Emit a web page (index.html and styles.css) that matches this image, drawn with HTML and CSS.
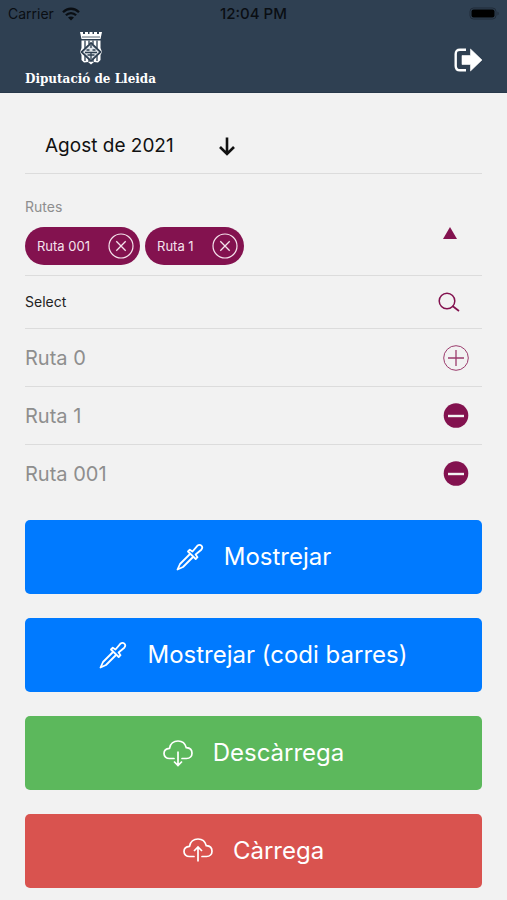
FILE: index.html
```html
<!DOCTYPE html>
<html lang="ca">
<head>
<meta charset="utf-8">
<meta name="viewport" content="width=device-width, initial-scale=1">
<title>Diputació de Lleida</title>
<link rel="stylesheet" href="styles.css">
</head>
<body>
<svg class="defs" aria-hidden="true">
  <symbol id="dropper" viewBox="0 0 28 28">
    <g fill="none" stroke="currentColor" stroke-width="1.8" stroke-linejoin="round" stroke-linecap="round">
      <path d="M14 11 4 21 1.500 26.500 7 24 17 14"/>
      <path d="M12 8.500 13.800 6.700 16.500 8.500 21.300 2.800C24.300.3 27.800 3.700 25.300 6.700L19.600 11.500 21.500 14.200 19.700 16Z"/>
    </g>
  </symbol>
  <symbol id="cloud" viewBox="0 0 30 28">
    <path d="M11 19.500H6.500C3.200 19.500 1 17.300 1 14.500 1 11.500 3.300 9.500 6.500 9.300 7.200 4.800 10.800 2 15 2 19.300 2 22.300 4.800 23.300 8.700 26.800 9 29 11.300 29 14.200 29 17.200 26.800 19.500 23.500 19.500H19" fill="none" stroke="currentColor" stroke-width="1.700" stroke-linecap="round"/>
  </symbol>
  <symbol id="minus" viewBox="0 0 26 26">
    <circle cx="13" cy="12.500" r="12.300" fill="#83124f"/>
    <path d="M5 13H21" stroke="#f3f3f3" stroke-width="2.400"/>
  </symbol>
  <symbol id="remove" viewBox="0 0 26 26">
    <circle cx="13" cy="13" r="12" fill="none" stroke="currentColor" stroke-width="1.200"/>
    <path d="M8.300 8.300 17.700 17.700M17.700 8.300 8.300 17.700" stroke="currentColor" stroke-width="1.300"/>
  </symbol>
</svg>

<header class="header">
  <div class="status">
    <span class="carrier">Carrier
      <svg class="wifi" viewBox="0 0 18 14" aria-hidden="true">
        <path d="M1 5.200C5.500.6 12.500.6 17 5.200M3.900 8.200C6.800 5.300 11.200 5.300 14.100 8.200" fill="none" stroke="currentColor" stroke-width="2.300"/>
        <path d="M9 13.500 6 10.500C7.600 9 10.400 9 12 10.500Z" fill="currentColor"/>
      </svg>
    </span>
    <time class="clock">12:04 PM</time>
    <svg class="battery" viewBox="0 0 30 14" aria-hidden="true">
      <rect x="1" y="1" width="26" height="11" rx="3.500" fill="none" stroke="#202b38"/>
      <rect x="2.500" y="2.500" width="23" height="8" rx="2" fill="#000"/>
      <path d="M28.500 4.500V8.500C30 7.800 30 5.200 28.500 4.500Z" fill="#202b38"/>
    </svg>
  </div>
  <div class="bar">
    <div class="brand">
      <svg class="crest" viewBox="0 0 24 34" aria-hidden="true">
        <path d="M1 1H4V3H6V1H9V3H10.500V1H13.500V3H15V1H18V3H20V1H23L21.500 8H2.500Z" fill="#fff"/>
        <path d="M3 6H21" stroke="#2f4052" stroke-width=".8"/>
        <path d="M2.500 9.500H21.500V17L23 21 21.500 24V29L19 31.500 15 31 12 33.500 9 31 5 31.500 2.500 29V24L1 21 2.500 17Z" fill="#fff"/>
        <path d="M6 9.500V17M10 9.500V13M14 9.500V13M18 9.500V17M6 25V30M10 28V31M14 28V31M18 25V30" stroke="#2f4052" stroke-width="1.300"/>
        <path d="M12 12 21.500 21 12 30 2.500 21Z" fill="#dfe4e9" stroke="#2f4052" stroke-width="1.800"/>
        <path d="M12 14V17M7.500 19H10.500M13.500 19H16.500M6 21.500H18M8.500 24H15.500M12 22V28" stroke="#2f4052" stroke-width="1.300"/>
      </svg>
      <span class="name">Diputació de Lleida</span>
    </div>
    <button class="plain logout" type="button" aria-label="Surt">
      <svg viewBox="0 0 28 24" aria-hidden="true">
        <path d="M12 1.700H6Q1.700 1.700 1.700 6V18Q1.700 22.300 6 22.300H12" fill="none" stroke="#fff" stroke-width="2.400"/>
        <path d="M8 7.500H16.500V1L28 12 16.500 23V16.500H8Z" fill="#fff" stroke="#fff" stroke-width=".6" stroke-linejoin="round"/>
      </svg>
    </button>
  </div>
</header>

<main class="main">
  <button class="plain month" type="button">Agost de 2021
    <svg viewBox="0 0 18 20" aria-hidden="true"><path d="M9 1.500V18M2 11 9 18 16 11" fill="none" stroke="currentColor" stroke-width="2.600"/></svg>
  </button>

  <section class="routes">
    <div class="selected">
      <div class="group">
        <span class="label">Rutes</span>
        <div class="chips">
          <button class="plain chip" type="button">Ruta 001<svg aria-hidden="true"><use href="#remove"/></svg></button>
          <button class="plain chip" type="button">Ruta 1<svg aria-hidden="true"><use href="#remove"/></svg></button>
        </div>
      </div>
      <button class="plain collapse" type="button" aria-label="Replega">
        <svg viewBox="0 0 14 12" aria-hidden="true"><path d="M7 0 14 12H0Z" fill="currentColor"/></svg>
      </button>
    </div>
    <label class="search">
      <input type="text" placeholder="Select" aria-label="Select">
      <svg viewBox="0 0 22 20" aria-hidden="true"><g fill="none" stroke="currentColor" stroke-width="1.500"><circle cx="9" cy="9" r="7.800"/><path d="M14.500 14 21 19" stroke-width="1.700"/></g></svg>
    </label>
    <ul class="options">
      <li><button class="plain option" type="button">Ruta 0<svg viewBox="0 0 26 26" aria-hidden="true"><g fill="none" stroke="currentColor"><circle cx="13" cy="13" r="12.300"/><path d="M5 13H21M13 5V21" stroke-width="1.300"/></g></svg></button></li>
      <li><button class="plain option" type="button">Ruta 1<svg aria-hidden="true"><use href="#minus"/></svg></button></li>
      <li><button class="plain option" type="button">Ruta 001<svg aria-hidden="true"><use href="#minus"/></svg></button></li>
    </ul>
  </section>

  <div class="actions">
    <button class="action blue" type="button"><svg class="dropper" aria-hidden="true"><use href="#dropper"/></svg>Mostrejar</button>
    <button class="action blue" type="button"><svg class="dropper" aria-hidden="true"><use href="#dropper"/></svg>Mostrejar (codi barres)</button>
    <button class="action green" type="button"><svg class="cloud" viewBox="0 0 30 28" aria-hidden="true"><use href="#cloud"/><path d="M15 12.500V26M11 22.500 15 26.500 19 22.500" fill="none" stroke="currentColor" stroke-width="1.700"/></svg>Descàrrega</button>
    <button class="action red" type="button"><svg class="cloud" viewBox="0 0 30 28" aria-hidden="true"><use href="#cloud"/><path d="M15 24.500V10.500M11 14 15 10 19 14" fill="none" stroke="currentColor" stroke-width="1.700"/></svg>Càrrega</button>
  </div>
</main>
</body>
</html>
```

FILE: styles.css
```css
* {
  box-sizing: border-box;
}

body {
  margin: 0;
  background: #f2f2f2;
  color: #111;
  font-family: Inter, "Liberation Sans", sans-serif;
}

svg {
  display: block;
  flex: none;
}

.defs {
  position: absolute;
  width: 0;
  height: 0;
}

.plain {
  margin: 0;
  padding: 0;
  border: 0;
  background: none;
  color: inherit;
  font: inherit;
  text-align: left;
}

.header {
  background: #2f4052;
  border-bottom: 1px solid #27384a;
}

.status {
  display: grid;
  grid-template-columns: 1fr auto 1fr;
  align-items: center;
  height: 27px;
  padding: 0 8px;
  color: #0a0e13;
  font-size: 14px;
}

.carrier {
  display: flex;
  align-items: center;
  gap: 8px;
}

.wifi {
  width: 18px;
  height: 14px;
}

.clock {
  font-size: 15px;
  font-weight: 500;
}

.battery {
  justify-self: end;
  width: 30px;
  height: 14px;
}

.bar {
  display: flex;
  justify-content: space-between;
  align-items: center;
  height: 65px;
  padding: 0 25px;
}

.brand {
  display: flex;
  flex-direction: column;
  align-items: center;
  gap: 4px;
}

.crest {
  width: 24px;
  height: 34px;
}

.name {
  color: #fff;
  font: bold 12px/20px "DejaVu Serif", serif;
}

.logout svg {
  width: 28px;
  height: 24px;
}

.main {
  padding: 25px 25px 12px;
}

.month {
  display: flex;
  align-items: center;
  gap: 44px;
  width: 100%;
  height: 56px;
  padding: 0 20px;
  border-bottom: 1px solid #dcdcdc;
  font-size: 19px;
}

.month svg {
  width: 18px;
  height: 20px;
}

.selected {
  display: flex;
  justify-content: space-between;
  align-items: center;
  height: 102px;
  padding: 22px 25px 10px 0;
  border-bottom: 1px solid #dcdcdc;
}

.label {
  display: block;
  color: #8e8e8e;
  font-size: 14px;
  line-height: 20px;
}

.chips {
  display: flex;
  gap: 5px;
  padding-top: 10px;
}

.chip {
  display: flex;
  align-items: center;
  gap: 18px;
  height: 38px;
  padding: 0 6px 0 12px;
  border-radius: 19px;
  background: #83124f;
  color: #f5e3ec;
  font-size: 13px;
}

.chip svg {
  width: 26px;
  height: 26px;
}

.collapse {
  padding-top: 4px;
  color: #83124f;
}

.collapse svg {
  width: 14px;
  height: 12px;
}

.search {
  display: flex;
  align-items: center;
  height: 53px;
  padding-right: 22px;
  border-bottom: 1px solid #dcdcdc;
  color: #83124f;
}

.search input {
  flex: 1;
  min-width: 0;
  padding: 0;
  border: 0;
  outline: 0;
  background: none;
  color: #222;
  font: 14px/20px Inter, "Liberation Sans", sans-serif;
}

.search input::placeholder {
  color: #222;
  opacity: 1;
}

.search svg {
  width: 22px;
  height: 20px;
}

.options {
  margin: 0;
  padding: 0;
  list-style: none;
}

.options li + li {
  border-top: 1px solid #dcdcdc;
}

.option {
  display: flex;
  justify-content: space-between;
  align-items: center;
  width: 100%;
  height: 57px;
  padding-right: 13px;
  color: #8e8e8e;
  font-size: 20px;
}

.option svg {
  width: 26px;
  height: 26px;
  color: #9b3c6d;
}

.actions {
  display: flex;
  flex-direction: column;
  gap: 24px;
  padding-top: 18px;
}

.action {
  display: flex;
  justify-content: center;
  align-items: center;
  gap: 20px;
  height: 74px;
  border: 0;
  border-radius: 5px;
  color: #fff;
  font: 24px/32px Inter, "Liberation Sans", sans-serif;
}

.dropper {
  width: 28px;
  height: 28px;
}

.cloud {
  width: 30px;
  height: 28px;
}

.blue {
  background: #007aff;
}

.green {
  background: #5cb85c;
}

.red {
  background: #d9534f;
}
```
